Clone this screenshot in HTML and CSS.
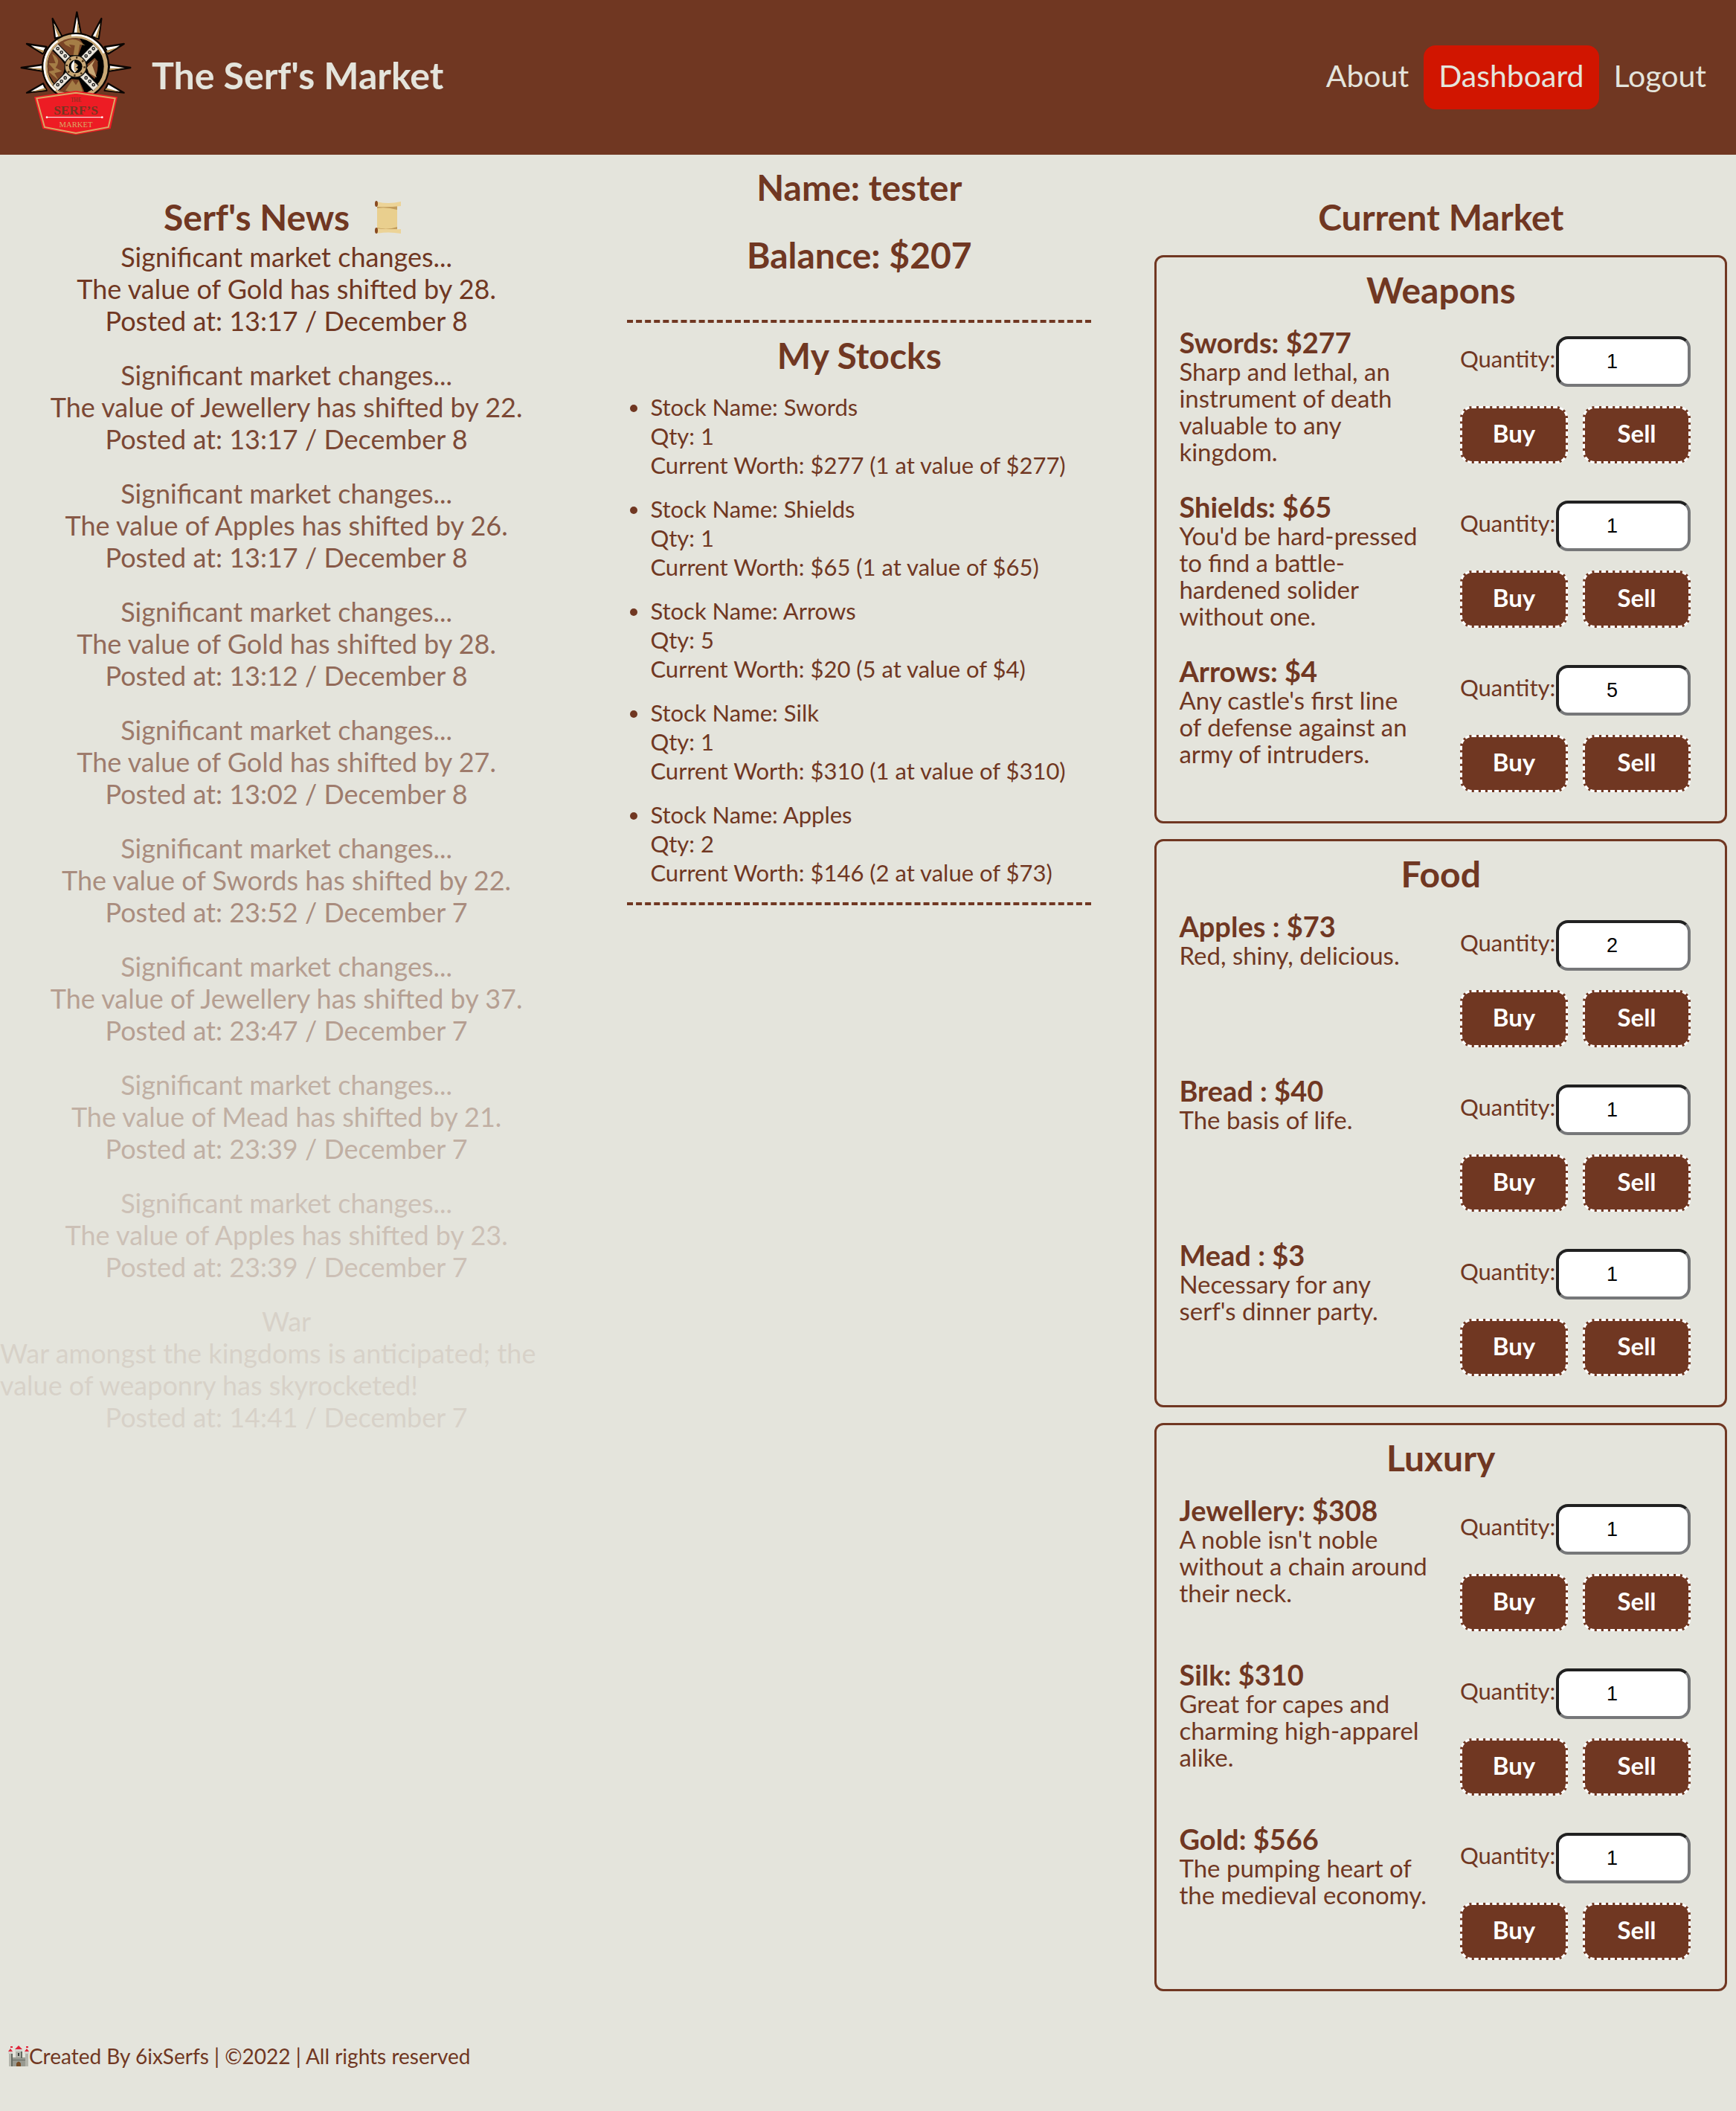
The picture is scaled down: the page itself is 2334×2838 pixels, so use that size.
FILE: index.html
```html
<!DOCTYPE html>
<html lang="en">
<head>
<meta charset="utf-8">
<meta name="viewport" content="width=device-width, initial-scale=1">
<title>The Serf's Market</title>
<link rel="stylesheet" href="styles.css">
</head>
<body>
<header class="site-header">
  <svg class="logo" viewBox="0 0 510 540" role="img" aria-label="The Serf's Market crest">
    <g fill="#fff" stroke="#0a0503" stroke-width="7" stroke-linejoin="round">
      <path d="M250 16L234 106H267Z"/>
      <path d="M152 42L162 122L190 114Z"/>
      <path d="M349 42L310 114L338 124Z"/>
      <path d="M48 144L112 184L128 156Z"/>
      <path d="M440 144L362 156L377 184Z"/>
      <path d="M26 240L112 254V228Z"/>
      <path d="M466 240L380 228V254Z"/>
      <path d="M48 341L128 332L114 304Z"/>
      <path d="M440 341L362 332L376 304Z"/>
    </g>
    <g fill="#b08a50">
      <path d="M252 50L250 102H264ZM154 60L176 116L186 110ZM346 58L324 118L335 120ZM70 156L113 180L118 172ZM420 156L374 180L368 172ZM50 241L110 251V243ZM442 241L382 251V243ZM62 338L126 330L122 322ZM426 338L364 330L368 322Z"/>
    </g>
    <circle cx="245" cy="235" r="137" fill="#0a0503"/>
    <circle cx="245" cy="235" r="122" fill="#000" stroke="#c9a876" stroke-width="16"/>
    <circle cx="245" cy="235" r="126" fill="none" stroke="#fff" stroke-width="8" stroke-dasharray="230 60 160 346"  transform="rotate(130 245 235)"/>
    <path d="M172 144Q212 112 262 124L274 142L256 190H222L190 164Z" fill="#7a4426"/>
    <path d="M196 138Q230 118 258 132L284 150L262 146L254 190H236L242 150L218 146L228 160L204 148Z" fill="#a57d46"/>
    <path d="M150 170L186 206L204 230L186 296L160 306L134 262Q126 210 150 170Z" fill="#7a4426"/>
    <path d="M150 184Q190 206 164 240L190 254L160 262L176 290L136 256L160 250L136 222L164 222Z" fill="#a57d46"/>
    <path d="M176 336L228 286L258 288L280 336L244 344Z" fill="#7a4426"/>
    <path d="M204 332L232 290L246 310L258 292L274 336L232 340Z" fill="#a57d46"/>
    <path d="M292 226L322 200L334 214Q338 250 322 286L296 260Z" fill="#7a4426"/>
    <path d="M290 240L324 206L312 230L330 280L300 262Z" fill="#c9a876"/>
    <g stroke="#111" stroke-width="34"><path d="M164 156L326 322M326 156L164 322"/></g>
    <g stroke="#e9e4da" stroke-width="27"><path d="M164 156L326 322M326 156L164 322"/></g>
    <g stroke="#111" stroke-width="4" fill="#e9e4da"><circle cx="173" cy="163" r="5"/><circle cx="188" cy="178" r="5"/><circle cx="203" cy="193" r="5"/><circle cx="317" cy="163" r="5"/><circle cx="302" cy="178" r="5"/><circle cx="287" cy="193" r="5"/><circle cx="173" cy="309" r="5"/><circle cx="188" cy="295" r="5"/><circle cx="203" cy="281" r="5"/><circle cx="317" cy="309" r="5"/><circle cx="302" cy="295" r="5"/><circle cx="287" cy="281" r="5"/></g>
    <circle cx="245" cy="235" r="44" fill="#c9a876" stroke="#111" stroke-width="4"/>
    <circle cx="245" cy="235" r="36" fill="none" stroke="#4a3013" stroke-width="8" stroke-dasharray="7 21.3"/>
    <circle cx="245" cy="235" r="27" fill="#000"/>
    <path d="M240 210Q212 236 242 260L252 248L242 240L254 234L240 226Z" fill="#fff"/>
    <path d="M242 218L256 232L244 236L256 246L242 256Q234 236 242 218Z" fill="#c9a876"/>
    <path d="M78 358L246 333L414 358L386 486L246 511L112 486Z" fill="#ed1c24"/>
    <path d="M88 364L246 341L404 364L377 480L246 504L120 480Z" fill="#ed1c24" stroke="#dba765" stroke-width="6"/>
    <g text-anchor="middle" font-family="Liberation Serif, serif">
      <text x="246" y="378" font-size="22" fill="#703722">THE</text>
      <text x="246" y="430" font-size="52" font-weight="bold" fill="#703722">SERF’S</text>
      <text x="246" y="479" font-size="32" fill="#dba765">MARKET</text>
    </g>
    <path d="M128 440H353" stroke="#fff" stroke-width="3"/>
    <circle cx="129" cy="440" r="4" fill="#fff"/><circle cx="352" cy="440" r="4" fill="#fff"/>
  </svg>
  <h1 class="site-title">The Serf's Market</h1>
  <nav class="site-nav">
    <a href="#about">About</a>
    <a href="#dashboard" class="active" aria-current="page">Dashboard</a>
    <a href="#logout">Logout</a>
  </nav>
</header>

<main class="dashboard">
  <section class="news">
    <h2 class="news-title">Serf's News
      <svg class="scroll" viewBox="0 0 36 44" aria-hidden="true">
        <path d="M3 5H30V40H3Z" fill="#e9cf8e"/>
        <path d="M3 7H30V12Q15 8 3 10ZM3 36Q16 40 30 35V38H3Z" fill="#c29c5c"/>
        <path d="M2 1Q18 5 35 1V7Q18 9 2 8ZM2 37Q18 40 35 38V44Q18 41 2 44Z" fill="#ecd397"/>
        <ellipse cx="2" cy="4" rx="2" ry="4" fill="#884a21"/><ellipse cx="2" cy="40" rx="2" ry="4" fill="#884a21"/>
      </svg>
    </h2>
    <article class="post"><p>Significant market changes...</p><p>The value of Gold has shifted by 28.</p><p>Posted at: 13:17 / December 8</p></article>
    <article class="post"><p>Significant market changes...</p><p>The value of Jewellery has shifted by 22.</p><p>Posted at: 13:17 / December 8</p></article>
    <article class="post"><p>Significant market changes...</p><p>The value of Apples has shifted by 26.</p><p>Posted at: 13:17 / December 8</p></article>
    <article class="post"><p>Significant market changes...</p><p>The value of Gold has shifted by 28.</p><p>Posted at: 13:12 / December 8</p></article>
    <article class="post"><p>Significant market changes...</p><p>The value of Gold has shifted by 27.</p><p>Posted at: 13:02 / December 8</p></article>
    <article class="post"><p>Significant market changes...</p><p>The value of Swords has shifted by 22.</p><p>Posted at: 23:52 / December 7</p></article>
    <article class="post"><p>Significant market changes...</p><p>The value of Jewellery has shifted by 37.</p><p>Posted at: 23:47 / December 7</p></article>
    <article class="post"><p>Significant market changes...</p><p>The value of Mead has shifted by 21.</p><p>Posted at: 23:39 / December 7</p></article>
    <article class="post"><p>Significant market changes...</p><p>The value of Apples has shifted by 23.</p><p>Posted at: 23:39 / December 7</p></article>
    <article class="post"><p>War</p><p>War amongst the kingdoms is anticipated; the value of weaponry has skyrocketed!</p><p>Posted at: 14:41 / December 7</p></article>
  </section>

  <section class="account">
    <h2>Name: tester</h2>
    <h2>Balance: $207</h2>
    <div class="stocks">
      <h2>My Stocks</h2>
      <ul>
        <li>Stock Name: Swords<br>Qty: 1<br>Current Worth: $277 (1 at value of $277)</li>
        <li>Stock Name: Shields<br>Qty: 1<br>Current Worth: $65 (1 at value of $65)</li>
        <li>Stock Name: Arrows<br>Qty: 5<br>Current Worth: $20 (5 at value of $4)</li>
        <li>Stock Name: Silk<br>Qty: 1<br>Current Worth: $310 (1 at value of $310)</li>
        <li>Stock Name: Apples<br>Qty: 2<br>Current Worth: $146 (2 at value of $73)</li>
      </ul>
    </div>
  </section>

  <section class="market">
    <h2>Current Market</h2>
    <section class="category">
      <h2>Weapons</h2>
      <div class="item">
        <div class="info"><h3>Swords: $277</h3><p>Sharp and lethal, an instrument of death valuable to any kingdom.</p></div>
        <form class="trade"><div class="quantity"><label for="q-swords">Quantity:</label><input id="q-swords" type="number" value="1"></div><button type="button">Buy</button><button type="button">Sell</button></form>
      </div>
      <div class="item">
        <div class="info"><h3>Shields: $65</h3><p>You'd be hard-pressed to find a battle-hardened solider without one.</p></div>
        <form class="trade"><div class="quantity"><label for="q-shields">Quantity:</label><input id="q-shields" type="number" value="1"></div><button type="button">Buy</button><button type="button">Sell</button></form>
      </div>
      <div class="item">
        <div class="info"><h3>Arrows: $4</h3><p>Any castle's first line of&nbsp;defense against an army of intruders.</p></div>
        <form class="trade"><div class="quantity"><label for="q-arrows">Quantity:</label><input id="q-arrows" type="number" value="5"></div><button type="button">Buy</button><button type="button">Sell</button></form>
      </div>
    </section>
    <section class="category">
      <h2>Food</h2>
      <div class="item">
        <div class="info"><h3>Apples : $73</h3><p>Red, shiny, delicious.</p></div>
        <form class="trade"><div class="quantity"><label for="q-apples">Quantity:</label><input id="q-apples" type="number" value="2"></div><button type="button">Buy</button><button type="button">Sell</button></form>
      </div>
      <div class="item">
        <div class="info"><h3>Bread : $40</h3><p>The basis of life.</p></div>
        <form class="trade"><div class="quantity"><label for="q-bread">Quantity:</label><input id="q-bread" type="number" value="1"></div><button type="button">Buy</button><button type="button">Sell</button></form>
      </div>
      <div class="item">
        <div class="info"><h3>Mead : $3</h3><p>Necessary for any serf's dinner party.</p></div>
        <form class="trade"><div class="quantity"><label for="q-mead">Quantity:</label><input id="q-mead" type="number" value="1"></div><button type="button">Buy</button><button type="button">Sell</button></form>
      </div>
    </section>
    <section class="category">
      <h2>Luxury</h2>
      <div class="item">
        <div class="info"><h3>Jewellery: $308</h3><p>A noble isn't noble without a chain around their neck.</p></div>
        <form class="trade"><div class="quantity"><label for="q-jewellery">Quantity:</label><input id="q-jewellery" type="number" value="1"></div><button type="button">Buy</button><button type="button">Sell</button></form>
      </div>
      <div class="item">
        <div class="info"><h3>Silk: $310</h3><p>Great for capes and charming high-apparel alike.</p></div>
        <form class="trade"><div class="quantity"><label for="q-silk">Quantity:</label><input id="q-silk" type="number" value="1"></div><button type="button">Buy</button><button type="button">Sell</button></form>
      </div>
      <div class="item">
        <div class="info"><h3>Gold: $566</h3><p>The pumping heart of the medieval economy.</p></div>
        <form class="trade"><div class="quantity"><label for="q-gold">Quantity:</label><input id="q-gold" type="number" value="1"></div><button type="button">Buy</button><button type="button">Sell</button></form>
      </div>
    </section>
  </section>
</main>

<footer class="site-footer">
  <svg class="castle" viewBox="0 0 28 28" aria-hidden="true">
    <path d="M1 11H5V28H1ZM23 11H27V28H23ZM10 6H18V28H10Z" fill="#b4b5ac"/>
    <path d="M5 16H23V28H5Z" fill="#989a91"/>
    <path d="M0 8H6V11H0ZM22 8H28V11H22ZM9 5H19V8H9Z" fill="#d3d4ce"/>
    <path d="M4 11H6V28H4ZM17 8H19V17H17ZM5 19H23V20H5Z" fill="#666b62"/>
    <path d="M0 8L3 4L6 8ZM22 8L25 4L28 8ZM9 5L14 0L19 5ZM3 1H6V3H3ZM24 1H27V3H24Z" fill="#df2439"/>
    <path d="M11 28V24Q14 19 17 24V28Z" fill="#784c25"/>
    <path d="M13 10H15V14H13Z" fill="#3c403c"/>
  </svg>
  <p>Created By 6ixSerfs | ©2022 | All rights reserved</p>
</footer>
</body>
</html>
```
FILE: styles.css
```css
:root {
  --brown: #703722;
  --parchment: #e4e4dc;
  --red: #d11500;
}

* {
  box-sizing: border-box;
  margin: 0;
  padding: 0;
}

body {
  background: var(--parchment);
  color: var(--brown);
  font-family: Lato, sans-serif;
}

h2 {
  font-size: 48px;
  line-height: 60px;
  text-align: center;
}

/* Header */
.site-header {
  display: flex;
  align-items: center;
  gap: 14px;
  height: 208px;
  padding: 0 20px 6px;
  background: var(--brown);
  color: var(--parchment);
}

.logo {
  width: 170px;
  height: 180px;
}

.site-title {
  font-size: 50px;
  line-height: 60px;
}

.site-nav {
  display: flex;
  margin-left: auto;
  padding-top: 6px;
}

.site-nav a {
  padding: 16px 20px 20px;
  border-radius: 16px;
  color: inherit;
  font-size: 41px;
  line-height: 50px;
  text-decoration: none;
}

.site-nav .active {
  background: var(--red);
}

/* Three-column layout */
.dashboard {
  display: grid;
  grid-template-columns: 33fr 33fr 34fr;
  align-items: start;
}

/* News */
.news {
  padding-top: 54px;
}

.news-title {
  display: flex;
  align-items: center;
  justify-content: center;
  gap: 34px;
  margin-bottom: 2px;
  padding-right: 10px;
}

.scroll {
  width: 36px;
  height: 44px;
}

.post {
  display: flex;
  flex-direction: column;
  align-items: center;
  margin-bottom: 30px;
  font-size: 36px;
  line-height: 43px;
}

.post:nth-of-type(2) { opacity: 0.9; }
.post:nth-of-type(3) { opacity: 0.8; }
.post:nth-of-type(4) { opacity: 0.7; }
.post:nth-of-type(5) { opacity: 0.6; }
.post:nth-of-type(6) { opacity: 0.5; }
.post:nth-of-type(7) { opacity: 0.4; }
.post:nth-of-type(8) { opacity: 0.3; }
.post:nth-of-type(9) { opacity: 0.2; }
.post:nth-of-type(10) { opacity: 0.1; }

/* Account */
.account {
  display: flex;
  flex-direction: column;
  align-items: center;
  gap: 31px;
  padding-top: 14px;
}

.stocks {
  width: 81%;
  margin-top: 26px;
  padding: 14px 0 20px;
  border-top: 4px dashed;
  border-bottom: 4px dashed;
}

.stocks ul {
  display: flex;
  flex-direction: column;
  gap: 20px;
  padding: 20px 0 0 31px;
  font-size: 31px;
  line-height: 39px;
}

/* Market */
.market {
  display: flex;
  flex-direction: column;
  gap: 21px;
  padding: 54px 12px 0;
}

.category {
  padding-bottom: 2px;
  border: 3px solid;
  border-radius: 12px;
}

.category h2 {
  padding: 14px 0 19px;
}

.item {
  display: flex;
  justify-content: space-between;
  min-height: 221px;
  padding: 0 46px 0 30px;
}

.info {
  width: 338px;
}

.info h3 {
  font-size: 38px;
  line-height: 42px;
}

.info p {
  font-size: 33px;
  line-height: 36px;
}

.trade {
  display: grid;
  grid-template-columns: 145px 145px;
  gap: 26px 20px;
  align-content: start;
  padding-top: 13px;
}

.quantity {
  grid-column: 1 / -1;
  display: flex;
  align-items: center;
  justify-content: space-between;
  font-size: 31px;
}

.quantity label {
  padding-bottom: 8px;
}

.quantity input {
  width: 181px;
  height: 68px;
  padding-right: 30px;
  border: 4px solid;
  border-color: #212121 #767779 #767779 #212121;
  border-radius: 16px;
  background: #fff;
  color: #000;
  font: 27px "Liberation Sans", sans-serif;
  text-align: center;
  appearance: textfield;
}

.quantity input::-webkit-inner-spin-button {
  display: none;
}

.trade button {
  height: 77px;
  padding-bottom: 6px;
  border: 3px dashed #fff;
  border-radius: 16px;
  background: var(--brown);
  color: #fff;
  font: bold 33px Lato, sans-serif;
}

/* Footer */
.site-footer {
  display: flex;
  align-items: center;
  padding: 67px 11px 54px;
  font-size: 28px;
  line-height: 40px;
}

.castle {
  width: 28px;
  height: 28px;
}
```
